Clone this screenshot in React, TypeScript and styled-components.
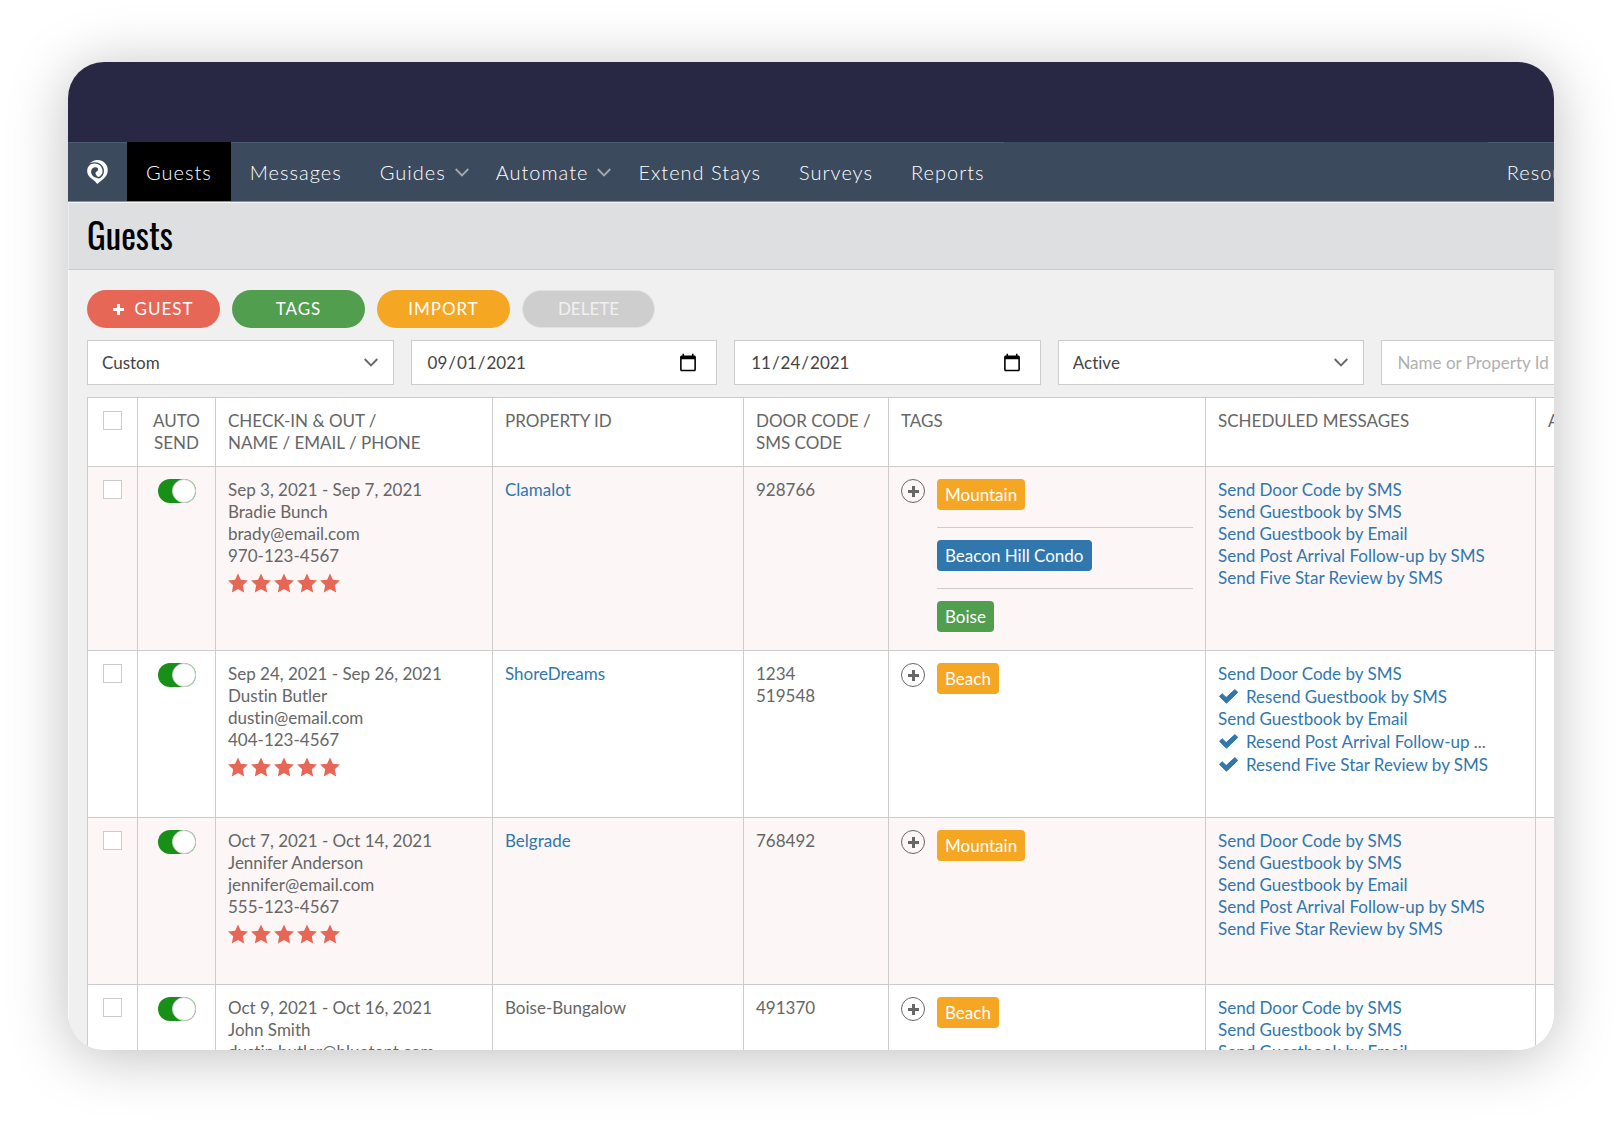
import React from 'react';
import styled, { createGlobalStyle } from 'styled-components';

const LINE = '#cccccc';
const LINK = '#2f77ad';
const RED = '#e66756';
const GREEN = '#529e4f';
const ORANGE = '#f5a623';
const BLUE = '#2f77ad';

const GlobalStyle = createGlobalStyle`
  *, *::before, *::after { box-sizing: border-box; }
  body {
    margin: 0;
    background: #fff;
    color: #666;
    font-family: Lato, "Liberation Sans", sans-serif;
    font-size: 17px;
    font-variant-ligatures: none;
    line-height: 22px;
  }
  button, input, select { font: inherit; color: inherit; margin: 0; }
  a { color: ${LINK}; text-decoration: none; }
`;

const Stage = styled.div`
  height: 100vh;
  padding: 62px 68px 74px;
  overflow: hidden;
`;

const Card = styled.div`
  height: 100%;
  overflow: hidden;
  border-radius: 36px;
  background: #f0f0f0;
  box-shadow: 0 6px 60px rgba(0, 0, 0, 0.26);
`;

const Page = styled.div`
  width: calc(100% + 153px);
`;

const TopBand = styled.div`
  height: 80px;
  background: #282844;
`;

const Nav = styled.nav`
  display: flex;
  align-items: stretch;
  height: 60px;
  padding-right: 73px;
  background: #3c4a5d;
  border-bottom: 1px solid #8390a3;
`;

const NavLink = styled.a<{ $active?: boolean; $menu?: boolean; $end?: boolean }>`
  display: flex;
  align-items: center;
  gap: 9px;
  padding: 0 ${(p) => (p.$menu ? 8 : 19)}px 0 19px;
  margin-left: ${(p) => (p.$end ? 'auto' : '0')};
  border-top: 1px solid ${(p) => (p.$active ? '#000' : '#4c5a6e')};
  background: ${(p) => (p.$active ? '#000' : 'transparent')};
  color: #fff;
  font-size: 20px;
  font-weight: 300;
  letter-spacing: 1px;
  white-space: nowrap;
`;

const TitleBar = styled.header`
  display: flex;
  align-items: center;
  height: 68px;
  padding: 0 18px 4px;
  border-left: 1px solid #ebecee;
  border-top: 1px solid #f4f4f5;
  border-bottom: 1px solid ${LINE};
  background: #dedfe1;
`;

const Title = styled.h1`
  margin: 0;
  color: #000;
  font-family: Oswald, "Roboto Condensed", "Liberation Sans Narrow", "DejaVu Sans Condensed", sans-serif;
  font-size: 35px;
  font-weight: 400;
  line-height: 48px;
`;

const Content = styled.main`
  padding: 20px 19px 0 18px;
  border-left: 1px solid #fbfbfb;
`;

const Actions = styled.div`
  display: flex;
  gap: 12px;
`;

const Pill = styled.button<{ $color: string }>`
  display: flex;
  align-items: center;
  justify-content: center;
  gap: 10px;
  width: 133px;
  height: 38px;
  padding: 0;
  border: 0;
  border-radius: 19px;
  background: ${(p) => p.$color};
  color: #fff;
  letter-spacing: 1px;

  &:disabled {
    border: 1px solid #e2e2e2;
    color: #f0f0f0;
    letter-spacing: 0;
  }
`;

const Filters = styled.div`
  display: grid;
  grid-template-columns: repeat(5, 1fr);
  gap: 17px;
  margin: 12px 0;
`;

const SelectBox = styled.label`
  display: grid;
  align-items: center;

  > * { grid-area: 1 / 1; }
  > svg { justify-self: end; margin-right: 16px; pointer-events: none; }
`;

const Select = styled.select`
  width: 100%;
  height: 45px;
  padding: 0 14px;
  border: 1px solid ${LINE};
  border-radius: 0;
  background: #fff;
  color: #444;
  appearance: none;
`;

const Input = styled.input`
  width: 100%;
  height: 45px;
  padding: 0 15px;
  border: 1px solid ${LINE};
  border-radius: 0;
  background: #fff;
  color: #444;

  &::placeholder { color: #b0b0b0; opacity: 1; }
  &::-webkit-calendar-picker-indicator { width: 20px; height: 20px; padding: 0; margin-right: 3px; }
`;

const Table = styled.table`
  width: 100%;
  table-layout: fixed;
  border-collapse: collapse;
  background: #fff;
`;

const Col = styled.col<{ $width?: number }>`
  width: ${(p) => (p.$width ? `${p.$width}px` : 'auto')};
`;

const HeadCell = styled.th<{ $center?: boolean }>`
  height: 69px;
  padding: 12px;
  border: 1px solid ${LINE};
  font-weight: 400;
  text-align: ${(p) => (p.$center ? 'center' : 'left')};
  vertical-align: top;
`;

const Row = styled.tr`
  &:nth-child(odd) { background: #fcf6f6; }
`;

const Cell = styled.td`
  height: 167px;
  padding: 12px 12px 1px;
  border: 1px solid ${LINE};
  vertical-align: top;
`;

const Check = styled.input`
  display: block;
  width: 19px;
  height: 19px;
  margin: 1px auto 0;
  appearance: none;
  border: 1px solid ${LINE};
  background: #fff;
`;

const Switch = styled.input`
  display: flex;
  justify-content: flex-end;
  width: 38px;
  height: 24px;
  margin: 0 auto;
  appearance: none;
  border-radius: 12px;
  background: #189018;

  &::before {
    content: '';
    width: 24px;
    height: 24px;
    border: 1px solid ${LINE};
    border-radius: 50%;
    background: #fff;
  }
`;

const Lines = styled.div`
  display: flex;
  flex-direction: column;
`;

const Stars = styled.div`
  display: flex;
  gap: 3px;
  margin-top: 6px;
`;

const TagArea = styled.div`
  display: flex;
  align-items: flex-start;
  gap: 12px;
`;

const AddButton = styled.button`
  display: grid;
  place-items: center;
  flex: none;
  width: 24px;
  height: 24px;
  padding: 0;
  border: 1px solid #666;
  border-radius: 50%;
  background: transparent;
`;

const TagList = styled.ul`
  flex: 1;
  margin: 0;
  padding: 0;
  list-style: none;
`;

const TagItem = styled.li`
  display: flex;
  padding-bottom: 17px;

  & + & { padding-top: 12px; border-top: 1px solid ${LINE}; }
`;

const Tag = styled.span<{ $color: string }>`
  height: 31px;
  padding: 0 8px;
  border-radius: 4px;
  background: ${(p) => p.$color};
  color: #fff;
  line-height: 31px;
`;

const Message = styled.div<{ $sent?: boolean }>`
  display: flex;
  align-items: center;
  gap: 7px;
  height: ${(p) => (p.$sent ? 23 : 22)}px;
  white-space: nowrap;
`;

function Logo() {
  return (
    <svg width="21" height="26" viewBox="0 0 22 26" aria-hidden="true">
      <path
        d="M2.500 4.300C4.600 1.700 7.700.3 11.200.3 17 .3 21.800 4.900 21.800 10.800c0 4.600-2.300 7.500-5 9.900-1.800 1.600-4 3.200-6 4.900-1.200-1.300-2.500-2.900-4-4.200C3.500 19.100.2 16.500.2 11.900c0-3 1.100-4.800 2.700-6.300z"
        fill="#fff"
      />
      <path
        d="M1.500 5.600C5 2.900 10.700 2.600 14 5.400c3.500 3 3.900 7.700 1.700 11-1.200 1.800-2.700 2.700-4.600 2.900"
        fill="none"
        stroke="#3c4a5d"
        strokeWidth="1.500"
      />
      <path
        d="M10.200 8.300C7 7.500 4.300 9.500 4.300 12.700c0 3.400 2.700 6.200 6.900 6.600.3-.4.400-.9.200-1.400-1-.9-2.500-2-2.500-3.500 0-1.300 1.100-1.800 2-2.500 1.300-1.100.9-3.100-.7-3.600z"
        fill="#3c4a5d"
      />
    </svg>
  );
}

function Chevron({ color }: { color: string }) {
  return (
    <svg width="14" height="9" viewBox="0 0 14 9" aria-hidden="true">
      <path d="M.7 1 7 7.500 13.300 1" fill="none" stroke={color} strokeWidth="1.800" />
    </svg>
  );
}

function Plus({ color }: { color: string }) {
  return (
    <svg width="11" height="11" viewBox="0 0 11 11" aria-hidden="true">
      <path d="M5.500 0v11M0 5.500h11" stroke={color} strokeWidth="3" />
    </svg>
  );
}

function Star() {
  return (
    <svg width="20" height="20" viewBox="0 0 20 19" aria-hidden="true">
      <path d="M10 0l2.900 6.300 7.100.8-5.200 4.700 1.400 7.200L10 15.600 3.800 19l1.400-7.200L0 7.100l7.100-.8z" fill={RED} />
    </svg>
  );
}

function SentMark() {
  return (
    <svg width="21" height="15" viewBox="0 0 21 15" aria-hidden="true">
      <path d="M1.500 7.300 4.100 4.700 8.200 8.500 16.900.6 19.800 3.400 8.400 14.200z" fill={BLUE} stroke={BLUE} strokeLinejoin="round" strokeWidth="1" />
    </svg>
  );
}

type Guest = {
  dates: string;
  name: string;
  email: string;
  phone: string;
  property: string;
  linked?: boolean;
  codes: string[];
  tags: { label: string; color: string }[];
  messages: { label: string; sent?: boolean; cut?: boolean }[];
};

const allMessages = [
  { label: 'Send Door Code by SMS' },
  { label: 'Send Guestbook by SMS' },
  { label: 'Send Guestbook by Email' },
  { label: 'Send Post Arrival Follow-up by SMS' },
  { label: 'Send Five Star Review by SMS' },
];

const guests: Guest[] = [
  {
    dates: 'Sep 3, 2021 - Sep 7, 2021',
    name: 'Bradie Bunch',
    email: 'brady@email.com',
    phone: '970-123-4567',
    property: 'Clamalot',
    linked: true,
    codes: ['928766'],
    tags: [
      { label: 'Mountain', color: ORANGE },
      { label: 'Beacon Hill Condo', color: BLUE },
      { label: 'Boise', color: GREEN },
    ],
    messages: allMessages,
  },
  {
    dates: 'Sep 24, 2021 - Sep 26, 2021',
    name: 'Dustin Butler',
    email: 'dustin@email.com',
    phone: '404-123-4567',
    property: 'ShoreDreams',
    linked: true,
    codes: ['1234', '519548'],
    tags: [{ label: 'Beach', color: ORANGE }],
    messages: [
      { label: 'Send Door Code by SMS' },
      { label: 'Resend Guestbook by SMS', sent: true },
      { label: 'Send Guestbook by Email' },
      { label: 'Resend Post Arrival Follow-up', sent: true, cut: true },
      { label: 'Resend Five Star Review by SMS', sent: true },
    ],
  },
  {
    dates: 'Oct 7, 2021 - Oct 14, 2021',
    name: 'Jennifer Anderson',
    email: 'jennifer@email.com',
    phone: '555-123-4567',
    property: 'Belgrade',
    linked: true,
    codes: ['768492'],
    tags: [{ label: 'Mountain', color: ORANGE }],
    messages: allMessages,
  },
  {
    dates: 'Oct 9, 2021 - Oct 16, 2021',
    name: 'John Smith',
    email: 'dustin.butler@bluetent.com',
    phone: '555-123-4567',
    property: 'Boise-Bungalow',
    codes: ['491370'],
    tags: [{ label: 'Beach', color: ORANGE }],
    messages: allMessages,
  },
];

function GuestRow({ guest }: { guest: Guest }) {
  return (
    <Row>
      <Cell><Check type="checkbox" aria-label={`Select ${guest.name}`} /></Cell>
      <Cell><Switch type="checkbox" defaultChecked aria-label={`Auto send for ${guest.name}`} /></Cell>
      <Cell>
        <Lines>
          <span>{guest.dates}</span>
          <span>{guest.name}</span>
          <span>{guest.email}</span>
          <span>{guest.phone}</span>
        </Lines>
        <Stars role="img" aria-label="5 stars">
          {[1, 2, 3, 4, 5].map((n) => <Star key={n} />)}
        </Stars>
      </Cell>
      <Cell>{guest.linked ? <a href="#property">{guest.property}</a> : guest.property}</Cell>
      <Cell>
        <Lines>{guest.codes.map((c) => <span key={c}>{c}</span>)}</Lines>
      </Cell>
      <Cell>
        <TagArea>
          <AddButton type="button" aria-label="Add tag"><Plus color="#666" /></AddButton>
          <TagList>
            {guest.tags.map((t) => (
              <TagItem key={t.label}><Tag $color={t.color}>{t.label}</Tag></TagItem>
            ))}
          </TagList>
        </TagArea>
      </Cell>
      <Cell>
        {guest.messages.map((m) => (
          <Message key={m.label} $sent={m.sent}>
            {m.sent && <SentMark />}
            <span><a href="#message">{m.label}</a>{m.cut && ' ...'}</span>
          </Message>
        ))}
      </Cell>
      <Cell />
    </Row>
  );
}

export default function App() {
  return (
    <>
      <GlobalStyle />
      <Stage>
        <Card>
          <Page>
            <TopBand />
            <Nav>
              <NavLink href="#home" aria-label="Home"><Logo /></NavLink>
              <NavLink href="#guests" $active>Guests</NavLink>
              <NavLink href="#messages">Messages</NavLink>
              <NavLink href="#guides" $menu>Guides<Chevron color="#a3a8af" /></NavLink>
              <NavLink href="#automate" $menu>Automate<Chevron color="#a3a8af" /></NavLink>
              <NavLink href="#extend">Extend Stays</NavLink>
              <NavLink href="#surveys">Surveys</NavLink>
              <NavLink href="#reports">Reports</NavLink>
              <NavLink href="#resources" $menu $end>Resources<Chevron color="#a3a8af" /></NavLink>
            </Nav>
            <TitleBar><Title>Guests</Title></TitleBar>
            <Content>
              <Actions>
                <Pill type="button" $color={RED}><Plus color="#fff" />GUEST</Pill>
                <Pill type="button" $color={GREEN}>TAGS</Pill>
                <Pill type="button" $color={ORANGE}>IMPORT</Pill>
                <Pill type="button" $color="#cecece" disabled>DELETE</Pill>
              </Actions>
              <Filters>
                <SelectBox>
                  <Select aria-label="Date range"><option>Custom</option></Select>
                  <Chevron color="#666" />
                </SelectBox>
                <Input type="date" aria-label="From" defaultValue="2021-09-01" />
                <Input type="date" aria-label="To" defaultValue="2021-11-24" />
                <SelectBox>
                  <Select aria-label="Status"><option>Active</option></Select>
                  <Chevron color="#666" />
                </SelectBox>
                <Input type="text" aria-label="Search" placeholder="Name or Property Id" />
              </Filters>
              <Table>
                <colgroup>
                  <Col $width={50} />
                  <Col $width={78} />
                  <Col $width={277} />
                  <Col $width={251} />
                  <Col $width={145} />
                  <Col $width={317} />
                  <Col $width={330} />
                  <Col />
                </colgroup>
                <thead>
                  <tr>
                    <HeadCell><Check type="checkbox" aria-label="Select all guests" /></HeadCell>
                    <HeadCell $center>AUTO SEND</HeadCell>
                    <HeadCell>CHECK-IN &amp; OUT /<br />NAME / EMAIL / PHONE</HeadCell>
                    <HeadCell>PROPERTY ID</HeadCell>
                    <HeadCell>DOOR CODE /<br />SMS CODE</HeadCell>
                    <HeadCell>TAGS</HeadCell>
                    <HeadCell>SCHEDULED MESSAGES</HeadCell>
                    <HeadCell>ACTIONS</HeadCell>
                  </tr>
                </thead>
                <tbody>
                  {guests.map((g) => <GuestRow key={g.name} guest={g} />)}
                </tbody>
              </Table>
            </Content>
          </Page>
        </Card>
      </Stage>
    </>
  );
}
